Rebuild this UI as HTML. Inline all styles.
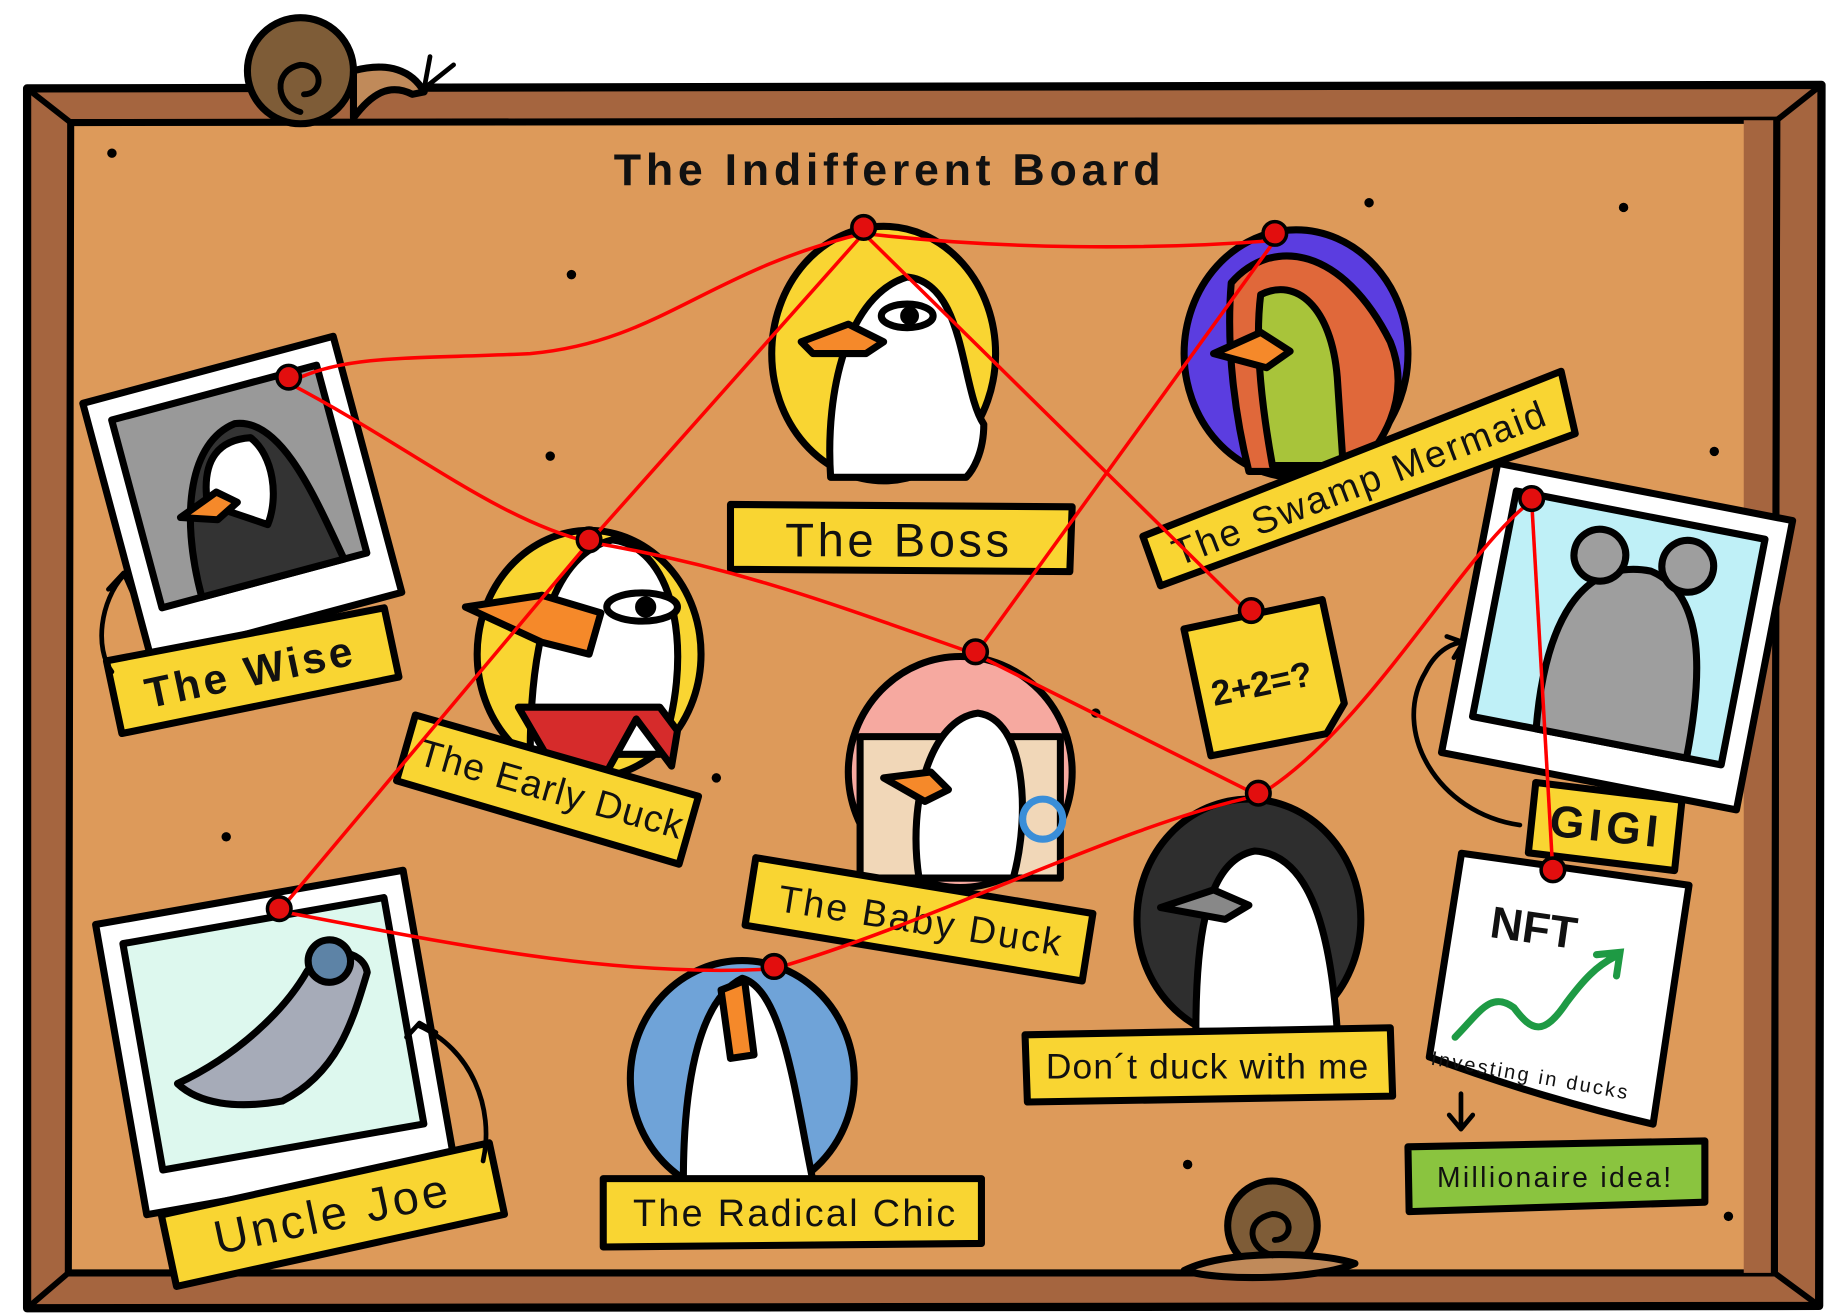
<!DOCTYPE html>
<html><head><meta charset="utf-8">
<style>
html,body{margin:0;padding:0;background:#fff;}
svg{display:block;width:1838px;height:1313px;}
text{font-family:"Liberation Sans",sans-serif;fill:#111;}
</style></head>
<body>
<svg viewBox="0 0 1560 1114" preserveAspectRatio="none" xmlns="http://www.w3.org/2000/svg">
<g stroke="#000" stroke-width="7" stroke-linejoin="round" stroke-linecap="round">
<path d="M23,75 L1546,72 L1544,1108 L23,1110 Z" fill="#A5653F"/>
<path d="M60,104 L1508,102 L1506,1080 L58,1080 Z" fill="#DD9A5A" stroke-width="6"/>
<path d="M1480,102 L1508,102 L1506,1080 L1480,1080 Z" fill="#A5653F" stroke="none"/>
<path d="M1508,102 L1506,1080" fill="none" stroke-width="6"/>
<path d="M23,75 L60,104 M1546,72 L1508,102 M1544,1108 L1506,1080 M23,1110 L58,1080" fill="none" stroke-width="5"/>
</g>
<g fill="#000">
<circle cx="95" cy="130" r="4"/><circle cx="485" cy="233" r="4"/><circle cx="1162" cy="172" r="4"/><circle cx="1378" cy="176" r="4"/>
<circle cx="467" cy="387" r="4"/><circle cx="1455" cy="383" r="4"/><circle cx="930" cy="605" r="4"/><circle cx="608" cy="660" r="4"/>
<circle cx="192" cy="710" r="4"/><circle cx="1008" cy="988" r="4"/><circle cx="1467" cy="1032" r="4"/><circle cx="125" cy="1018" r="4"/>
</g>
<text x="755" y="157" text-anchor="middle" font-size="38" font-weight="bold" letter-spacing="4">The Indifferent Board</text>

<g stroke="#000" stroke-width="6" stroke-linejoin="round" stroke-linecap="round">
<ellipse cx="750" cy="300" rx="95" ry="108" fill="#F9D532"/>
<path d="M705,405 C700,330 720,250 770,235 C820,240 815,330 835,360 C835,385 825,400 820,405 Z" fill="#fff"/>
<path d="M680,290 L720,275 L750,290 L735,300 L690,300 Z" fill="#F5892A"/>
<ellipse cx="770" cy="268" rx="22" ry="10" fill="#fff"/><circle cx="772" cy="268" r="5" fill="#000"/>
<path d="M620,428 L910,430 L908,485 L620,483 Z" fill="#F9D532"/>
<ellipse cx="1100" cy="300" rx="95" ry="105" fill="#5B3DE0"/>
<path d="M1045,240 C1080,200 1140,210 1180,290 C1200,340 1170,380 1150,400 L1060,400 C1050,360 1040,300 1045,240 Z" fill="#E0683A"/>
<path d="M1070,250 C1100,235 1130,260 1135,320 L1140,395 L1080,395 C1070,340 1065,290 1070,250 Z" fill="#A8C43A"/>
<path d="M1030,300 L1070,282 L1095,298 L1075,312 Z" fill="#F5892A"/>
<path d="M970,455 L1325,315 L1337,368 L985,497 Z" fill="#F9D532"/>
<g transform="rotate(-15 205 420)"><rect x="95" y="310" width="220" height="225" fill="#fff"/><rect x="115" y="330" width="180" height="165" fill="#999"/>
<path d="M150,495 C150,420 175,365 215,360 C255,365 265,440 275,495 Z" fill="#333"/>
<path d="M175,420 C180,380 200,370 225,375 C240,395 235,430 220,450 Z" fill="#fff"/>
<path d="M150,425 L185,412 L200,425 L180,435 Z" fill="#F5892A"/></g>
<g transform="rotate(-12 215 570)"><path d="M95,535 L335,540 L335,600 L95,598 Z" fill="#F9D532"/></g>
<ellipse cx="500" cy="555" rx="95" ry="105" fill="#F9D532"/>
<path d="M450,640 C450,540 470,470 520,458 C575,465 590,560 560,640 Z" fill="#fff"/>
<path d="M440,600 L475,660 L515,655 L540,610 L570,650 L575,620 L560,600 Z" fill="#D62B2B"/>
<path d="M395,515 L460,505 L510,520 L500,555 L460,545 Z" fill="#F5892A"/>
<ellipse cx="545" cy="515" rx="30" ry="12" fill="#fff"/><circle cx="548" cy="515" r="6" fill="#000"/>
<g transform="rotate(16 465 668)"><path d="M340,640 L590,640 L590,700 L340,698 Z" fill="#F9D532"/></g>
<ellipse cx="815" cy="655" rx="95" ry="98" fill="#F6A9A0"/>
<rect x="730" y="625" width="170" height="120" fill="#F1D7B8"/>
<path d="M780,745 C770,680 790,610 830,605 C870,610 875,690 860,745 Z" fill="#fff"/>
<path d="M750,660 L790,655 L805,670 L785,680 Z" fill="#F5892A"/>
<circle cx="885" cy="695" r="17" fill="none" stroke="#3A8ED8"/>
<g transform="rotate(9 780 780)"><path d="M635,750 L925,752 L925,810 L635,808 Z" fill="#F9D532"/></g>
<g transform="rotate(-12 1075 575)"><path d="M1015,520 L1135,520 L1135,610 L1115,632 L1015,630 Z" fill="#F9D532"/></g>
<g transform="rotate(11 1372 540)"><rect x="1245" y="415" width="255" height="250" fill="#fff"/><rect x="1265" y="435" width="215" height="195" fill="#BFF0F7"/>
<path d="M1320,630 C1310,540 1330,480 1390,480 C1440,490 1450,560 1450,630 Z" fill="#9E9E9E"/>
<circle cx="1345" cy="475" r="22" fill="#9E9E9E"/><circle cx="1420" cy="470" r="22" fill="#9E9E9E"/></g>
<g transform="rotate(6 1360 700)"><path d="M1300,670 L1425,672 L1425,732 L1300,730 Z" fill="#F9D532"/></g>
<ellipse cx="1060" cy="780" rx="95" ry="102" fill="#2E2E2E"/>
<path d="M1015,875 C1015,810 1020,730 1065,722 C1115,725 1130,800 1135,875 Z" fill="#fff"/>
<path d="M985,770 L1030,755 L1060,768 L1040,780 Z" fill="#888"/>
<path d="M870,878 L1180,872 L1182,930 L872,935 Z" fill="#F9D532"/>
<g transform="rotate(8 1312 840)"><path d="M1225,735 L1420,735 L1418,940 C1360,935 1290,925 1222,910 Z" fill="#fff"/></g>
<path d="M1240,928 L1240,955 M1230,946 L1240,958 L1250,946" fill="none" stroke-width="4"/>
<path d="M1195,973 L1447,968 L1447,1020 L1196,1028 Z" fill="#8AC43F"/>
<g transform="rotate(-10 230 880)"><rect x="100" y="760" width="265" height="250" fill="#fff"/><rect x="120" y="780" width="225" height="195" fill="#DDF8EE"/>
<path d="M145,905 C200,890 245,860 270,830 C290,810 320,820 320,840 C300,880 280,920 230,935 C190,935 160,925 145,905 Z" fill="#A6ABB8"/>
<circle cx="290" cy="825" r="18" fill="#5D83A6"/></g>
<g transform="rotate(-12 285 1030)"><path d="M140,1000 L425,998 L425,1060 L140,1062 Z" fill="#F9D532"/></g>
<path d="M355,870 C400,890 420,940 410,985 M345,880 L356,868 L370,876" fill="none" stroke-width="4"/>
<path d="M105,488 C85,510 80,550 95,570 M92,500 L105,486 L112,502" fill="none" stroke-width="4"/>
<path d="M1290,700 C1220,690 1180,620 1210,570 C1220,550 1235,545 1242,545 M1228,540 L1242,545 L1234,558" fill="none" stroke-width="4"/>
<ellipse cx="630" cy="915" rx="95" ry="100" fill="#6FA3D8"/>
<path d="M580,1002 C580,930 590,850 630,830 C665,840 675,930 690,1002 Z" fill="#fff"/>
<path d="M612,840 L632,832 L640,895 L620,898 Z" fill="#F5892A"/>
<path d="M512,1000 L833,1000 L833,1055 L512,1058 Z" fill="#F9D532"/>
<circle cx="255" cy="60" r="45" fill="#7E5C37"/>
<path d="M255,95 C235,90 230,60 255,55 C275,55 275,80 258,80" fill="none" stroke-width="5"/>
<path d="M300,60 C330,52 350,60 360,78 L350,80 C330,70 315,80 300,100 Z" fill="#C08A5A"/>
<path d="M365,48 L360,75 L385,55" fill="none" stroke-width="4"/>
<circle cx="1080" cy="1040" r="38" fill="#7E5C37"/>
<path d="M1005,1078 C1040,1060 1120,1062 1150,1072 C1120,1085 1040,1088 1005,1078 Z" fill="#C08A5A"/>
<path d="M1080,1065 C1060,1060 1055,1035 1080,1030 C1098,1030 1098,1052 1082,1052" fill="none" stroke-width="5"/>
</g>

<text x="763" y="472" text-anchor="middle" font-size="40" letter-spacing="3">The Boss</text>
<text transform="translate(1158,420) rotate(-21)" text-anchor="middle" font-size="32" letter-spacing="2">The Swamp Mermaid</text>
<text transform="translate(215,582) rotate(-12)" text-anchor="middle" font-size="36" font-weight="bold" letter-spacing="3">The Wise</text>
<text transform="translate(465,680) rotate(16)" text-anchor="middle" font-size="32" letter-spacing="1">The Early Duck</text>
<text transform="translate(780,792) rotate(9)" text-anchor="middle" font-size="32" letter-spacing="2">The Baby Duck</text>
<text transform="translate(1073,590) rotate(-12)" text-anchor="middle" font-size="30" font-weight="bold">2+2=?</text>
<text transform="translate(1362,714) rotate(6)" text-anchor="middle" font-size="38" font-weight="bold" letter-spacing="4">GIGI</text>
<text x="1025" y="915" text-anchor="middle" font-size="30" letter-spacing="1">Don´t duck with me</text>
<text transform="translate(1300,800) rotate(8)" text-anchor="middle" font-size="38" font-weight="bold">NFT</text>
<text transform="translate(1298,918) rotate(10)" text-anchor="middle" font-size="17" letter-spacing="2">Investing in ducks</text>
<path d="M1235,880 C1255,860 1265,840 1285,855 C1300,875 1310,880 1330,850 C1345,830 1355,820 1370,812 M1355,810 L1375,808 L1372,828" fill="none" stroke="#1E9A44" stroke-width="6" stroke-linecap="round"/>
<text x="1320" y="1007" text-anchor="middle" font-size="24" letter-spacing="2">Millionaire idea!</text>
<text transform="translate(285,1043) rotate(-12)" text-anchor="middle" font-size="40" letter-spacing="3">Uncle Joe</text>
<text x="675" y="1040" text-anchor="middle" font-size="32" letter-spacing="2">The Radical Chic</text>

<g stroke="#F00" stroke-width="3" fill="none">
<path d="M733,198 C850,212 980,212 1082,204"/>
<path d="M733,198 C600,230 560,290 450,300 C350,305 290,300 245,325"/>
<path d="M733,198 L500,460"/>
<path d="M733,198 L1062,522"/>
<path d="M245,325 C350,380 420,440 500,460"/>
<path d="M500,460 C620,480 700,510 828,555"/>
<path d="M500,460 L237,773"/>
<path d="M1082,204 L828,555"/>
<path d="M828,555 L1068,675"/>
<path d="M237,773 C380,800 520,830 657,822"/>
<path d="M657,822 C800,780 950,700 1068,675"/>
<path d="M1068,675 C1160,620 1240,470 1300,425"/>
<path d="M1300,425 L1318,740"/>
</g>
<g fill="#E20E0E" stroke="#000" stroke-width="3">
<circle cx="733" cy="193" r="10"/><circle cx="1082" cy="198" r="10"/><circle cx="245" cy="320" r="10"/>
<circle cx="500" cy="458" r="10"/><circle cx="828" cy="553" r="10"/><circle cx="1062" cy="518" r="10"/>
<circle cx="1300" cy="423" r="10"/><circle cx="1068" cy="673" r="10"/><circle cx="237" cy="771" r="10"/>
<circle cx="657" cy="820" r="10"/><circle cx="1318" cy="738" r="10"/>
</g>
</svg>
</body></html>
